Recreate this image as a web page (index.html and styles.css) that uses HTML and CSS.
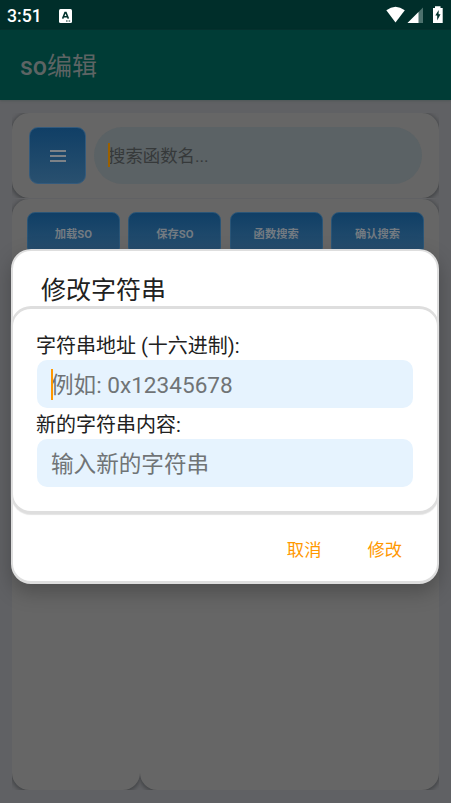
FILE: index.html
```html
<!DOCTYPE html>
<html lang="zh-CN">
<head>
<meta charset="utf-8">
<title>so编辑</title>
<link rel="stylesheet" href="styles.css">
</head>
<body>
<div class="screen">
  <header class="status">
    <span class="clock">3:51</span>
    <svg class="ime" width="13" height="14" viewBox="0 0 13 14"><rect width="13" height="14" rx="1.5" fill="#fff"/><path d="M3.6 9.6 6 3.6h1l2.4 6M4.5 7.8h4" fill="none" stroke="#00302b" stroke-width="1.5"/><path d="M7 12h1.6M9.6 12h1.6" stroke="#00302b" stroke-width="1"/></svg>
    <svg class="signals" width="58" height="18" viewBox="0 0 58 18">
      <path d="M0.3 4.3Q9.5-2.8 18.8 4.3L9.5 16.6Z" fill="#fff"/>
      <path d="M21.5 17 37 1.5V17Z" fill="#4d716d"/>
      <path d="M21.5 17 32.5 6V17Z" fill="#fff"/>
      <path d="M47 2h2V.3h5.500V2h2.200V17H47Z" fill="#fff"/>
      <path d="M52.700 4 49.300 9.600h1.900V14.500L54.500 8.300h-1.900Z" fill="#00302b"/>
    </svg>
  </header>
  <div class="appbar"><h1><b>so</b>编辑</h1></div>
  <main>
    <section class="card search">
      <button class="menu"><svg width="16" height="12" viewBox="0 0 16 12"><path d="M0 1h16M0 6h16M0 11h16" stroke="#7d8287" stroke-width="2"/></svg></button>
      <div class="query"><i class="caret"></i>搜索函数名...</div>
    </section>
    <section class="card tools">
      <button>加载SO</button><button>保存SO</button><button>函数搜索</button><button>确认搜索</button>
    </section>
    <div class="panels"><section class="card"></section><section class="card"></section></div>
  </main>
</div>
<div class="dialog">
  <h2>修改字符串</h2>
  <div class="form">
    <label>字符串地址 (十六进制):</label>
    <div class="field"><i class="caret"></i>例如: 0x12345678</div>
    <label>新的字符串内容:</label>
    <div class="field">输入新的字符串</div>
  </div>
  <div class="actions"><button>取消</button><button>修改</button></div>
</div>
</body>
</html>
```
FILE: styles.css
```css
* { box-sizing: border-box; }
body { margin: 0; font-family: Roboto, "Noto Sans CJK SC", sans-serif; }
h1, h2 { margin: 0; font-weight: 400; }
button { border: 0; padding: 0; background: none; font-family: inherit; }
.screen { width: 451px; height: 803px; overflow: hidden; display: flex; flex-direction: column; background: #606164; }
.status { height: 30px; flex: none; display: flex; align-items: center; background: #002e2a; padding: 0 8px 0 7px; }
.clock { color: #fff; font-size: 17.700px; font-weight: 500; line-height: 30px; padding-top: 2px; }
.ime { margin: 2px 0 0 17px; }
.signals { margin: 0 -1px 0 auto; }
.appbar { height: 70px; flex: none; background: #003c36; padding-left: 20px; box-shadow: 0 1px 2px #505757; }
.appbar h1 { font-size: 25px; line-height: 73px; color: #5d6464; }
.appbar b { font-weight: 500; }
main { flex: 1; display: flex; flex-direction: column; padding: 13px 12px; }
.card { background: #666; border-radius: 17px; box-shadow: 0 1px 4px 1px #404244; clip-path: inset(0); }
.search { height: 85px; flex: none; display: flex; padding: 14px 17px; gap: 8px; }
.menu { width: 57px; height: 57px; border-radius: 9px; border: 1px solid #335a7c; background: linear-gradient(#103f66, #29506f); display: flex; align-items: center; justify-content: center; }
.query { flex: 1; height: 57px; border-radius: 29px; background: #5b6265; color: #36393a; font-size: 17.400px; line-height: 59px; padding-left: 14px; position: relative; }
.caret { position: absolute; left: 14px; top: 16px; width: 2px; height: 24px; background: #9b6000; }
.tools { height: 200px; flex: none; margin-top: 1px; padding: 13px 15px; display: grid; grid-template-columns: repeat(4, 1fr); gap: 8.500px; border-bottom-left-radius: 0; border-bottom-right-radius: 0; }
.tools button { height: 43px; border-radius: 8px; border: 1px solid #2a5577; background: linear-gradient(#103f66, #29506f); color: #737b82; font-size: 11.300px; line-height: 15px; padding-top: 1px; font-weight: 700; }
.panels { flex: 1; display: grid; grid-template-columns: 128px 1fr; }
.dialog { position: absolute; left: 11px; top: 249px; width: 428px; height: 335px; background: #fff; border: 2px solid #dedede; border-bottom-width: 3px; border-radius: 20px; box-shadow: 0 8px 20px rgba(0,0,0,.25); display: flex; flex-direction: column; }
.dialog h2 { height: 55px; font-size: 25px; line-height: 79px; padding-left: 28px; color: #212121; }
.form { height: 208px; flex: none; margin: 0 -2px; border: solid #dedede; border-width: 3px 2px; border-radius: 20px; background: #fff; padding: 24px 24px 0; box-shadow: 0 1px 1px #e4e4e4; }
.form label { display: block; height: 27px; line-height: 27px; font-size: 20px; color: #212121; margin-left: -1px; }
.field { position: relative; height: 48px; margin: 0 0 4px; border-radius: 10px; background: #e6f3fe; line-height: 51px; padding-left: 14px; font-size: 22.600px; color: #707476; }
.form .field { width: 376px; }
.field .caret { top: 9px; height: 31px; background: #ff9800; }
.actions { display: flex; justify-content: flex-end; gap: 46px; padding: 24px 35px 0; }
.actions button { font-size: 17.300px; line-height: 24px; color: #ff9800; }
```
